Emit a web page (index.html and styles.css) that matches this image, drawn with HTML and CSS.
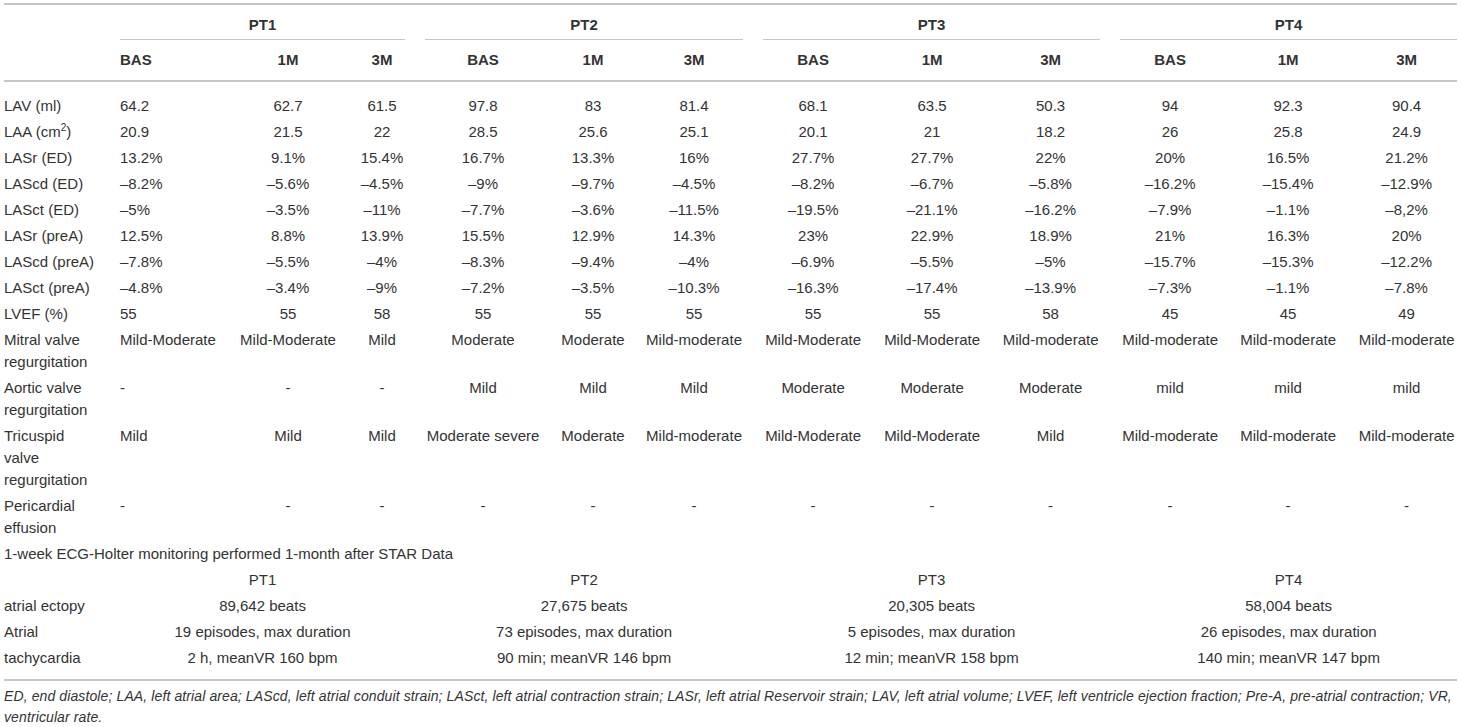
FILE: index.html
```html
<!DOCTYPE html>
<html lang="en">
<head>
<meta charset="utf-8">
<title>Echocardiographic and Holter data</title>
<link rel="stylesheet" href="styles.css">
</head>
<body>
<div class="page">
<table class="data">
<colgroup>
<col class="w-stub">
<col class="w117"><col class="w122"><col class="w66">
<col class="w136"><col class="w84"><col class="w118">
<col class="w120"><col class="w118"><col class="w119">
<col class="w120"><col class="w116"><col class="w111">
</colgroup>
<thead>
<tr class="grp">
<th rowspan="2" class="stub"></th>
<th colspan="3"><div class="grp-label">PT1</div></th>
<th colspan="3"><div class="grp-label">PT2</div></th>
<th colspan="3"><div class="grp-label">PT3</div></th>
<th colspan="3" class="last"><div class="grp-label">PT4</div></th>
</tr>
<tr class="sub">
<th class="left">BAS</th><th>1M</th><th>3M</th>
<th>BAS</th><th>1M</th><th>3M</th>
<th>BAS</th><th>1M</th><th>3M</th>
<th>BAS</th><th>1M</th><th class="last">3M</th>
</tr>
</thead>
<tbody>
<tr class="first-row"><td class="lbl">LAV (ml)</td><td class="left">64.2</td><td>62.7</td><td>61.5</td><td>97.8</td><td>83</td><td>81.4</td><td>68.1</td><td>63.5</td><td>50.3</td><td>94</td><td>92.3</td><td class="last">90.4</td></tr>
<tr><td class="lbl">LAA (cm<sup>2</sup>)</td><td class="left">20.9</td><td>21.5</td><td>22</td><td>28.5</td><td>25.6</td><td>25.1</td><td>20.1</td><td>21</td><td>18.2</td><td>26</td><td>25.8</td><td class="last">24.9</td></tr>
<tr><td class="lbl">LASr (ED)</td><td class="left">13.2%</td><td>9.1%</td><td>15.4%</td><td>16.7%</td><td>13.3%</td><td>16%</td><td>27.7%</td><td>27.7%</td><td>22%</td><td>20%</td><td>16.5%</td><td class="last">21.2%</td></tr>
<tr><td class="lbl">LAScd (ED)</td><td class="left">–8.2%</td><td>–5.6%</td><td>–4.5%</td><td>–9%</td><td>–9.7%</td><td>–4.5%</td><td>–8.2%</td><td>–6.7%</td><td>–5.8%</td><td>–16.2%</td><td>–15.4%</td><td class="last">–12.9%</td></tr>
<tr><td class="lbl">LASct (ED)</td><td class="left">–5%</td><td>–3.5%</td><td>–11%</td><td>–7.7%</td><td>–3.6%</td><td>–11.5%</td><td>–19.5%</td><td>–21.1%</td><td>–16.2%</td><td>–7.9%</td><td>–1.1%</td><td class="last">–8,2%</td></tr>
<tr><td class="lbl">LASr (preA)</td><td class="left">12.5%</td><td>8.8%</td><td>13.9%</td><td>15.5%</td><td>12.9%</td><td>14.3%</td><td>23%</td><td>22.9%</td><td>18.9%</td><td>21%</td><td>16.3%</td><td class="last">20%</td></tr>
<tr><td class="lbl">LAScd (preA)</td><td class="left">–7.8%</td><td>–5.5%</td><td>–4%</td><td>–8.3%</td><td>–9.4%</td><td>–4%</td><td>–6.9%</td><td>–5.5%</td><td>–5%</td><td>–15.7%</td><td>–15.3%</td><td class="last">–12.2%</td></tr>
<tr><td class="lbl">LASct (preA)</td><td class="left">–4.8%</td><td>–3.4%</td><td>–9%</td><td>–7.2%</td><td>–3.5%</td><td>–10.3%</td><td>–16.3%</td><td>–17.4%</td><td>–13.9%</td><td>–7.3%</td><td>–1.1%</td><td class="last">–7.8%</td></tr>
<tr><td class="lbl">LVEF (%)</td><td class="left">55</td><td>55</td><td>58</td><td>55</td><td>55</td><td>55</td><td>55</td><td>55</td><td>58</td><td>45</td><td>45</td><td class="last">49</td></tr>
<tr><td class="lbl">Mitral valve regurgitation</td><td class="left">Mild-Moderate</td><td>Mild-Moderate</td><td>Mild</td><td>Moderate</td><td>Moderate</td><td>Mild-moderate</td><td>Mild-Moderate</td><td>Mild-Moderate</td><td>Mild-moderate</td><td>Mild-moderate</td><td>Mild-moderate</td><td class="last">Mild-moderate</td></tr>
<tr><td class="lbl">Aortic valve regurgitation</td><td class="left">-</td><td>-</td><td>-</td><td>Mild</td><td>Mild</td><td>Mild</td><td>Moderate</td><td>Moderate</td><td>Moderate</td><td>mild</td><td>mild</td><td class="last">mild</td></tr>
<tr><td class="lbl">Tricuspid valve regurgitation</td><td class="left">Mild</td><td>Mild</td><td>Mild</td><td>Moderate severe</td><td>Moderate</td><td>Mild-moderate</td><td>Mild-Moderate</td><td>Mild-Moderate</td><td>Mild</td><td>Mild-moderate</td><td>Mild-moderate</td><td class="last">Mild-moderate</td></tr>
<tr><td class="lbl">Pericardial effusion</td><td class="left">-</td><td>-</td><td>-</td><td>-</td><td>-</td><td>-</td><td>-</td><td>-</td><td>-</td><td>-</td><td>-</td><td class="last">-</td></tr>
<tr><td class="lbl" colspan="13">1-week ECG-Holter monitoring performed 1-month after STAR Data</td></tr>
<tr><td class="lbl"></td><td colspan="3">PT1</td><td colspan="3">PT2</td><td colspan="3">PT3</td><td colspan="3" class="last">PT4</td></tr>
<tr><td class="lbl">atrial ectopy</td><td colspan="3">89,642 beats</td><td colspan="3">27,675 beats</td><td colspan="3">20,305 beats</td><td colspan="3" class="last">58,004 beats</td></tr>
<tr><td class="lbl">Atrial</td><td colspan="3">19 episodes, max duration</td><td colspan="3">73 episodes, max duration</td><td colspan="3">5 episodes, max duration</td><td colspan="3" class="last">26 episodes, max duration</td></tr>
<tr class="last-row"><td class="lbl">tachycardia</td><td colspan="3">2 h, meanVR 160 bpm</td><td colspan="3">90 min; meanVR 146 bpm</td><td colspan="3">12 min; meanVR 158 bpm</td><td colspan="3" class="last">140 min; meanVR 147 bpm</td></tr>
</tbody>
</table>
<p class="foot">ED, end diastole; LAA, left atrial area; LAScd, left atrial conduit strain; LASct, left atrial contraction strain; LASr, left atrial Reservoir strain; LAV, left atrial volume; LVEF, left ventricle ejection fraction; Pre-A, pre-atrial contraction; VR, ventricular rate.</p>
</div>
</body>
</html>
```
FILE: styles.css
```css
html, body {
  margin: 0;
  padding: 0;
  background: #ffffff;
}
body {
  color: #333333;
  font-family: "Liberation Sans", Arial, sans-serif;
  font-size: 15px;
}
.page {
  padding: 3px 4px 0 4px;
}
table.data {
  width: 100%;
  table-layout: fixed;
  border-collapse: separate;
  border-spacing: 0;
  border-top: 2px solid #c6c6c6;
  border-bottom: 2px solid #c6c6c6;
}
.w-stub { width: 106px; }
.w117 { width: 117px; }
.w122 { width: 122px; }
.w66 { width: 66px; }
.w136 { width: 136px; }
.w84 { width: 84px; }
.w118 { width: 118px; }
.w120 { width: 120px; }
.w119 { width: 119px; }
.w116 { width: 116px; }
.w111 { width: 111px; }

th, td {
  padding: 2px 10px;
  line-height: 22px;
  text-align: center;
  vertical-align: top;
}
th {
  font-weight: bold;
}
.grp th {
  padding-top: 9px;
  padding-bottom: 0;
}
.grp-label {
  padding-bottom: 3px;
  border-bottom: 1px solid #c6c6c6;
}
.sub th {
  padding-top: 9px;
  padding-bottom: 9px;
  border-bottom: 2px solid #c6c6c6;
}
th.stub {
  padding: 0;
  border-bottom: 2px solid #c6c6c6;
}
td {
  white-space: nowrap;
}
td.lbl {
  text-align: left;
  padding-left: 0;
  white-space: normal;
}
.left {
  text-align: left;
}
.last {
  padding-right: 0;
}
.first-row td {
  padding-top: 13px;
}
.last-row td {
  padding-bottom: 10px;
}
sup {
  font-size: 10px;
  line-height: 0;
  vertical-align: 6px;
}
.foot {
  margin: 5px 0 0 0;
  font-style: italic;
  font-size: 14px;
  letter-spacing: 0.11px;
  line-height: 21px;
}
```
